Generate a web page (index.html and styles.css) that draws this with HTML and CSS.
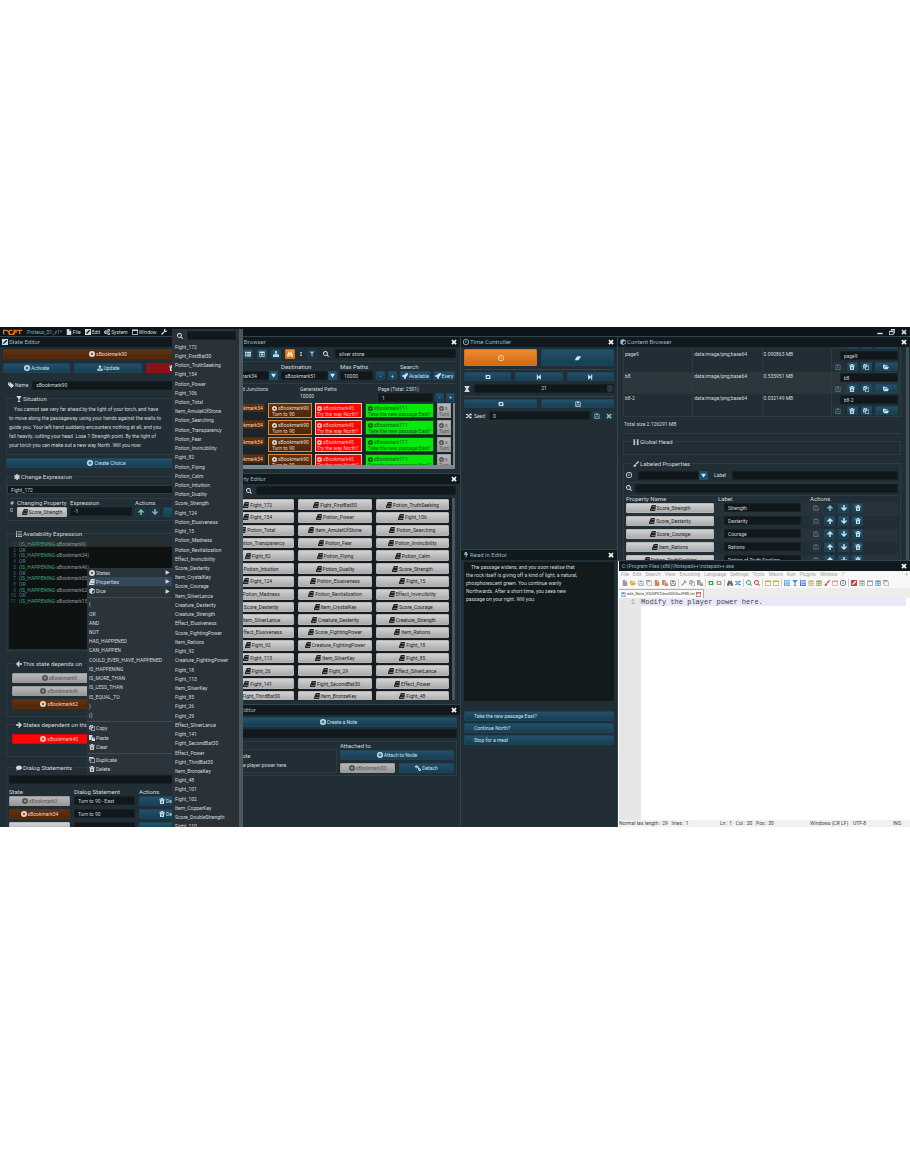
FILE: index.html
```html
<!DOCTYPE html>
<html lang="en">
<head>
<meta charset="utf-8">
<title>Proteus_01_v1*</title>
<link rel="stylesheet" href="styles.css">
</head>
<body>
<svg class="defs" aria-hidden="true">
<symbol id="star" viewBox="0 0 16 16"><path fill-rule="evenodd" d="M8 0a8 8 0 1 0 0 16A8 8 0 0 0 8 0zm0 4 1.200 2.500 2.600.3-2 1.800.6 2.700L8 10l-2.400 1.300.6-2.700-2-1.800 2.600-.3z"/></symbol>
<symbol id="plus" viewBox="0 0 16 16"><path fill-rule="evenodd" d="M8 0a8 8 0 1 0 0 16A8 8 0 0 0 8 0zM6.700 3.500h2.600v3.200h3.200v2.600H9.300v3.200H6.700V9.300H3.500V6.700h3.200z"/></symbol>
<symbol id="upload" viewBox="0 0 16 16"><path d="M8 0l4.500 5H10v5H6V5H3.500zM1 10h3.500l1 2h5l1-2H15v5H1z"/></symbol>
<symbol id="trash" viewBox="0 0 16 16"><path fill-rule="evenodd" d="M6 0h4l1 2h4v2.500H1V2h4zM2 5.500h12L13 16H3zM5.500 7v7H7V7zM9 7v7h1.500V7z"/></symbol>
<symbol id="tag" viewBox="0 0 16 16"><path fill-rule="evenodd" d="M0 1h7l9 8-6.500 7L0 7.500zM3.500 3a1.500 1.500 0 1 0 0 3 1.500 1.500 0 0 0 0-3z"/></symbol>
<symbol id="glass" viewBox="0 0 16 16"><path d="M1 0h14L9.300 8v5.500L13 16H3l3.700-2.500V8z"/></symbol>
<symbol id="asterisk" viewBox="0 0 16 16"><path d="M6 0h4v4.500L14 2.300l2 3.400L12 8l4 2.300-2 3.400-4-2.200V16H6v-4.500l-4 2.200-2-3.400L4 8 0 5.700l2-3.400 4 2.200z"/></symbol>
<symbol id="list" viewBox="0 0 16 16"><path d="M5 1h11v2.500H5zM5 7h11v2.500H5zM5 12.500h11V15H5zM0 0h3v5H1.500V2H0zM0 6h3v4H0zM0 11h3v5H0z"/></symbol>
<symbol id="left" viewBox="0 0 16 16"><path d="M8 0l2.500 2.500L7 6h9v4H7l3.500 3.500L8 16 0 8z"/></symbol>
<symbol id="right" viewBox="0 0 16 16"><path d="M8 0L5.500 2.500 9 6H0v4h9l-3.500 3.500L8 16l8-8z"/></symbol>
<symbol id="up" viewBox="0 0 16 16"><path d="M8 0l8 8-2.500 2.500L10 7v9H6V7l-3.500 3.500L0 8z"/></symbol>
<symbol id="down" viewBox="0 0 16 16"><path d="M8 16l8-8-2.500-2.500L10 9V0H6v9L2.500 5.500 0 8z"/></symbol>
<symbol id="comment" viewBox="0 0 16 16"><path d="M8 1c5 0 8 3 8 6s-3 6-8 6c-1 0-2-.2-2.800-.4L1 15l1-4C.8 10 0 8.700 0 7c0-3 3-6 8-6z"/></symbol>
<symbol id="caret" viewBox="0 0 16 16"><path d="M2 1l13 7-13 7z"/></symbol>
<symbol id="cube" viewBox="0 0 16 16"><path fill-rule="evenodd" d="M8 0l7 3.500v9L8 16l-7-3.500v-9zm0 8v6l5.500-2.800V5.300z"/></symbol>
<symbol id="book" viewBox="0 0 16 16"><path fill-rule="evenodd" d="M5 0h11l-3 12H4c-1.500 0-1.500 1.300 0 1.300h9L15 6l1 .5L13.500 16H2c-2 0-2.500-2-2-4zm2 3L6.500 4.500h6L13 3z"/></symbol>
<symbol id="copy" viewBox="0 0 16 16"><path fill-rule="evenodd" d="M4 0h6v4H9L4.500 9v3H0V4zm6 4h6v12H6V8zM3.800 2L2 4h2zM2 5.500v5h1V8l4-4V1.500H5.500v4zm9.500 1L8 9.500v5h6.500v-9H12z"/></symbol>
<symbol id="paste" viewBox="0 0 16 16"><path d="M0 0h9v5H6v8H0zM7 6h5v4h4v6H7zm6 0l3 3h-3z"/></symbol>
<symbol id="clone" viewBox="0 0 16 16"><path fill-rule="evenodd" d="M0 0h12v3H1.500v9H0zM4 4h12v12H4zm1.500 1.500v9h9v-9z"/></symbol>
<symbol id="search" viewBox="0 0 16 16"><path fill-rule="evenodd" d="M6.500 0a6.500 6.500 0 0 1 5.300 10.200L16 14l-2 2-4-4.100A6.500 6.500 0 1 1 6.500 0zm0 2.500a4 4 0 1 0 0 8 4 4 0 0 0 0-8z"/></symbol>
<symbol id="times" viewBox="0 0 16 16"><path d="M1 4l3-3 4 4 4-4 3 3-4 4 4 4-3 3-4-4-4 4-3-3 4-4z"/></symbol>
<symbol id="th" viewBox="0 0 16 16"><path d="M0 2h4.500v3.500H0zM5.500 2H16v3.500H5.500zM0 6.500h4.500V10H0zM5.500 6.500H16V10H5.500zM0 11h4.500v3.500H0zM5.500 11H16v3.500H5.500z"/></symbol>
<symbol id="table" viewBox="0 0 16 16"><path fill-rule="evenodd" d="M1 1h14v14H1zm1.500 4v3.500h3V5zm4.500 0v3.500h2.500V5zm4 0v3.500h2.500V5zm-8.500 5v3.500h3V10zM7 10v3.500h2.500V10zm4 0v3.500h2.500V10z"/></symbol>
<symbol id="sitemap" viewBox="0 0 16 16"><path d="M5.500 0h5v5H9v2h5v3h2v6h-5v-6h1V8.500H9V10h1.500v6h-5v-6H7V8.500H4V10h1v6H0v-6h2V7h5V5H5.500z"/></symbol>
<symbol id="binoc" viewBox="0 0 16 16"><path d="M3 1h3.500v3h3V1H13v3l3 7v4H9.500v-4h-3v4H0v-4l3-7z"/></symbol>
<symbol id="dots" viewBox="0 0 16 16"><path d="M5 0h6v4H5zM5 6h6v4H5zM5 12h6v4H5z"/></symbol>
<symbol id="filter" viewBox="0 0 16 16"><path d="M1 1h14L9.500 8v8l-3-3V8z"/></symbol>
<symbol id="drop" viewBox="0 0 16 16"><path d="M0 2h16L8 15z"/></symbol>
<symbol id="rocket" viewBox="0 0 16 16"><path d="M16 0c0 5-2 8-5 10l-1 5-4 1v-4L4 10H0l1-4 5-1c2-3 5-5 10-5z"/></symbol>
<symbol id="clock" viewBox="0 0 16 16"><path fill-rule="evenodd" d="M8 0a8 8 0 1 0 0 16A8 8 0 0 0 8 0zm0 2a6 6 0 1 1 0 12A6 6 0 0 1 8 2zM7 4h2v5.500H5V8h2z"/></symbol>
<symbol id="eraser" viewBox="0 0 16 16"><path d="M6 3h10l-2 5-5 6H0l1-4z"/></symbol>
<symbol id="retweet" viewBox="0 0 16 16"><path d="M3.500 1.500L7 6.500H5V10.500h5l2 3H2v-7H0zM12.500 14.500L9 9.500h2V5.500H6L4 2.500h10v7h2z"/></symbol>
<symbol id="back" viewBox="0 0 16 16"><path d="M2 1h3v6l8-6v14L5 9v6H2z"/></symbol>
<symbol id="fwd" viewBox="0 0 16 16"><path d="M14 1h-3v6L3 1v14l8-6v6h3z"/></symbol>
<symbol id="hour" viewBox="0 0 16 16"><path d="M1 0h14v2h-1.500c0 3-1.500 4.500-3.500 6 2 1.500 3.500 3 3.500 6H15v2H1v-2h1.500c0-3 1.500-4.500 3.500-6-2-1.500-3.500-3-3.500-6H1z"/></symbol>
<symbol id="save" viewBox="0 0 16 16"><path fill-rule="evenodd" d="M1 1h11l3 3v11H1zm1.500 1.500v11H4V8.500h8v5h1.500v-9l-2-2H11V6H4.500V2.500zM5.500 10v3.500h5V10z"/></symbol>
<symbol id="shuffle" viewBox="0 0 16 16"><path d="M0 2.500h4.500l6 8H12V8l4 4-4 4v-2.500H9L3 5.500H0zM0 10.500h2.700L4.500 8 6.500 11l-2 2.500H0zM7 5l2-2.500h3V0l4 4-4 4V5.500h-1.500L9 7.500z"/></symbol>
<symbol id="bolt" viewBox="0 0 16 16"><path d="M5 0h6L9.500 4.500H14L6 16 7.500 8H3z"/></symbol>
<symbol id="folder" viewBox="0 0 16 16"><path d="M0 2h6l1.500 2H13v2H4l-3 6H0zM4.500 7H16l-3 7H1.500z"/></symbol>
<symbol id="head" viewBox="0 0 16 16"><path d="M0 1h6.500v1.500H5V7h6V2.500H9.500V1H16v1.500h-1.500v11H16V15H9.500v-1.500H11V8.700H5v4.800h1.500V15H0v-1.500h1.500v-11H0z"/></symbol>
<symbol id="brush" viewBox="0 0 16 16"><path d="M14 0c1.500 0 2 1 2 2L9.500 10 6.500 7.500zM5.500 8.500L8.700 11c0 4-4.700 5.500-8.700 4 2-1 2-2.500 2.500-4 .5-1.300 1.500-2.300 3-2.500z"/></symbol>
<symbol id="file" viewBox="0 0 16 16"><path d="M2 0h7v5.500h5V16H2zm8.500 0L14 4h-3.500z"/></symbol>
<symbol id="edit" viewBox="0 0 16 16"><path fill-rule="evenodd" d="M0 0h16v16H0zm11.500 2L4 9.500 3 13l3.500-1L14 4.500z"/></symbol>
<symbol id="cogs" viewBox="0 0 16 16"><path fill-rule="evenodd" d="M4 3h3l.5 2 2 1v3l-2 1-.5 3H4l-1-2-2.500 0L0 7l1.500-1zm1.500 3a2 2 0 1 0 0 4 2 2 0 0 0 0-4zM11 0h3l2 2v3l-2 2h-3L9 5V2zm1.500 2a1.500 1.500 0 1 0 0 3 1.500 1.500 0 0 0 0-3zM11 9h3l2 2v3l-2 2h-3l-2-2v-3zm1.500 2a1.500 1.500 0 1 0 0 3 1.500 1.500 0 0 0 0-3z"/></symbol>
<symbol id="win" viewBox="0 0 16 16"><path fill-rule="evenodd" d="M0 1h16v14H0zm2 4v8h12V5z"/></symbol>
<symbol id="wrench" viewBox="0 0 16 16"><path d="M10 0h3l-2 3 2 2 3-2c0 4-3 6-6 5l-7 8-3-3 8-7c-1-3 0-5 2-6z"/></symbol>
<symbol id="link" viewBox="0 0 16 16"><path fill-rule="evenodd" d="M3 1h3l4 4v3H7L6 7l1-1-2-2-1.500 1.500L5 7v3L0 5V3zm5 7h4l4 4v2l-2 2h-3l-3-4V9.500zm2 2v1l2.500 2.500 1-1L11 10z"/></symbol>
<symbol id="min" viewBox="0 0 16 16"><path d="M1 10h14v4H1z"/></symbol>
<symbol id="restore" viewBox="0 0 16 16"><path fill-rule="evenodd" d="M5 0h11v11h-4v5H0V5h5zm2 4v1h5v4h2V4zM2 8v6h8V8z"/></symbol>
</svg>

<main class="app">
  <header class="menubar">
    <svg class="logo" viewBox="0 0 60 16" role="img" aria-label="Logo"><path d="M2 15V3h10l6 6v6M19 3v12h12V9M28 3h-8M31 3h10M34 8h8M34 3v12M42 3h16M50 3v12" fill="none" stroke="#e2731c" stroke-width="4"/></svg>
    <span class="project">Proteus_01_v1*</span>
    <button><svg><use href="#file"/></svg>File</button>
    <button><svg><use href="#edit"/></svg>Edit</button>
    <button><svg><use href="#cogs"/></svg>System</button>
    <button><svg><use href="#win"/></svg>Window</button>
    <button aria-label="Tools"><svg><use href="#wrench"/></svg></button>
    <span class="push"></span>
    <button aria-label="Minimize"><svg><use href="#min"/></svg></button>
    <button aria-label="Restore"><svg><use href="#restore"/></svg></button>
    <button aria-label="Close"><svg><use href="#times"/></svg></button>
  </header>

  <div class="workspace">
    <section class="column">
      <article class="panel state">
        <h1><svg><use href="#edit"/></svg>State Editor</h1>
        <div class="pad stack4">
          <button class="btn brown"><svg><use href="#star"/></svg>sBookmark90</button>
          <div class="cols three wide-gap"><button class="btn"><svg><use href="#plus"/></svg>Activate</button><button class="btn"><svg><use href="#upload"/></svg>Update</button><button class="btn crimson"><svg><use href="#trash"/></svg>Delete</button></div>
        </div>
        <div class="scroller">
          <label class="name-row"><svg><use href="#tag"/></svg>Name<input value="sBookmark90"></label>
          <section class="group situation">
            <h2><svg><use href="#glass"/></svg>Situation</h2>
            <p>&emsp;You cannot see very far ahead by the light of your torch, and have<br>to move along the passageway using your hands against the walls to<br>guide you. Your left hand suddenly encounters nothing at all, and you<br>fall heavily, cutting your head. Lose 1 Strength point. By the light of<br>your torch you can make out a new way North. Will you now:</p>
          </section>
          <button class="btn create"><svg><use href="#plus"/></svg>Create Choice</button>
          <section class="group change">
            <h2><svg><use href="#asterisk"/></svg>Change Expression</h2>
            <input aria-label="Change expression" value="Fight_172">
            <table>
              <tr><th>#</th><th>Changing Property</th><th>Expression</th><th>Actions</th></tr>
              <tr><td>0</td><td><button class="btn gray"><svg><use href="#book"/></svg>Score_Strength</button></td><td><input aria-label="Expression" value="-1"></td><td><span class="acts"><button class="btn dim" aria-label="Up"><svg><use href="#up"/></svg></button><button class="btn dim" aria-label="Down"><svg><use href="#down"/></svg></button><button class="btn grow" aria-label="Delete"></button></span></td></tr>
            </table>
          </section>
          <section class="group avail">
            <h2><svg><use href="#list"/></svg>Availability Expression</h2>
            <div class="code"><ol>
              <li class="cur"><i>1</i><b>(IS_HAPPENING</b>·sBookmark9<b>)</b></li><li><i>2</i><em>OR</em></li>
              <li><i>3</i><b>(IS_HAPPENING</b>·sBookmark34<b>)</b></li><li><i>4</i><em>OR</em></li>
              <li><i>5</i><b>(IS_HAPPENING</b>·sBookmark46<b>)</b></li><li><i>6</i><em>OR</em></li>
              <li><i>7</i><b>(IS_HAPPENING</b>·sBookmark55<b>)</b></li><li><i>8</i><em>OR</em></li>
              <li><i>9</i><b>(IS_HAPPENING</b>·sBookmark62<b>)</b></li><li><i>10</i><em>OR</em></li>
              <li><i>11</i><b>(IS_HAPPENING</b>·sBookmark15<b>)</b></li>
            </ol></div>
          </section>
          <section class="group depends">
            <h2><svg><use href="#left"/></svg>This state depends on</h2>
            <button class="btn gray faint"><svg><use href="#star"/></svg>sBookmark9</button>
            <button class="btn gray faint"><svg><use href="#star"/></svg>sBookmark46</button>
            <button class="btn brown"><svg><use href="#star"/></svg>sBookmark62</button>
          </section>
          <section class="group dependent">
            <h2><svg><use href="#right"/></svg>States dependent on this</h2>
            <button class="btn red"><svg><use href="#star"/></svg>sBookmark45</button>
          </section>
          <section class="group dialog">
            <h2><svg><use href="#comment"/></svg>Dialog Statements</h2>
            <input aria-label="Dialog filter">
            <table>
              <tr><th>State</th><th>Dialog Statement</th><th>Actions</th></tr>
              <tr><td><button class="btn gray faint"><svg><use href="#star"/></svg>sBookmark3</button></td><td><input aria-label="Statement" value="Turn to 90 - East"></td><td><button class="btn"><svg><use href="#trash"/></svg>Delete</button></td></tr>
              <tr><td><button class="btn brown"><svg><use href="#star"/></svg>sBookmark34</button></td><td><input aria-label="Statement" value="Turn to 90"></td><td><button class="btn"><svg><use href="#trash"/></svg>Delete</button></td></tr>
              <tr><td><button class="btn gray" aria-label="State"></button></td><td><input aria-label="Statement"></td><td><button class="btn" aria-label="Delete"></button></td></tr>
            </table>
          </section>
        </div>
      </article>
    </section>

    <section class="column middle">
      <article class="panel">
        <h1 class="lead-wide"><span>Path Browser</span><button aria-label="Close"><svg><use href="#times"/></svg></button></h1>
        <div class="tools">
          <button class="btn" aria-label="Grid"><svg><use href="#th"/></svg></button><button class="btn" aria-label="Table"><svg><use href="#table"/></svg></button><button class="btn" aria-label="Tree"><svg><use href="#sitemap"/></svg></button><button class="btn orange" aria-label="Find"><svg><use href="#binoc"/></svg></button><svg class="thin"><use href="#dots"/></svg><button class="btn dim" aria-label="Filter"><svg><use href="#filter"/></svg></button><svg class="find"><use href="#search"/></svg><input aria-label="Search paths" value="silver stone">
        </div>
        <div class="paths">
          <div class="query">
            <label>Origin<span class="combo"><select><option>sBookmark34</option></select><svg><use href="#drop"/></svg></span></label>
            <label>Destination<span class="combo"><select><option>sBookmark51</option></select><svg><use href="#drop"/></svg></span></label>
            <label>Max Paths<input value="10000"></label>
            <button class="btn">-</button><button class="btn">+</button>
            <div class="search-by"><span>Search</span><span class="pair"><button class="btn"><svg><use href="#rocket"/></svg>Available</button><button class="btn"><svg><use href="#rocket"/></svg>Every</button></span></div>
          </div>
          <div class="stats">
            <div>Generated Junctions</div><div>Generated Paths<br>10000</div>
            <div>Page (Total: 2501)<span class="pager"><input aria-label="Page" value="1"><button class="btn">-</button><button class="btn">+</button></span></div>
          </div>
          <div class="results">
            <div class="steps"><button class="step brown"><svg><use href="#star"/></svg>sBookmark34</button><button class="step brown lit"><svg><use href="#star"/></svg>sBookmark90<br>Turn to 90</button><button class="step red"><svg><use href="#star"/></svg>sBookmark45<br>Try the way North?</button><button class="step green"><svg><use href="#star"/></svg>sBookmark111<br>Take the new passage East?</button><button class="step gray faint"><svg><use href="#star"/></svg>s<br>Turn</button></div>
            <div class="steps"><button class="step brown"><svg><use href="#star"/></svg>sBookmark34</button><button class="step brown lit"><svg><use href="#star"/></svg>sBookmark90<br>Turn to 90</button><button class="step red"><svg><use href="#star"/></svg>sBookmark45<br>Try the way North?</button><button class="step green"><svg><use href="#star"/></svg>sBookmark111<br>Take the new passage East?</button><button class="step gray faint"><svg><use href="#star"/></svg>s<br>Turn</button></div>
            <div class="steps"><button class="step brown"><svg><use href="#star"/></svg>sBookmark34</button><button class="step brown lit"><svg><use href="#star"/></svg>sBookmark90<br>Turn to 90</button><button class="step red"><svg><use href="#star"/></svg>sBookmark45<br>Try the way North?</button><button class="step green"><svg><use href="#star"/></svg>sBookmark111<br>Take the new passage East?</button><button class="step gray faint"><svg><use href="#star"/></svg>s<br>Turn</button></div>
            <div class="steps"><button class="step brown"><svg><use href="#star"/></svg>sBookmark34</button><button class="step brown lit"><svg><use href="#star"/></svg>sBookmark90<br>Turn to 90</button><button class="step red"><svg><use href="#star"/></svg>sBookmark45<br>Try the way North?</button><button class="step green"><svg><use href="#star"/></svg>sBookmark111<br>Take the new passage East?</button><button class="step gray faint"><svg><use href="#star"/></svg>s<br>Turn</button></div>
          </div>
        </div>
      </article>

      <article class="panel">
        <h1 class="lead"><span>Property Editor</span><button aria-label="Close"><svg><use href="#times"/></svg></button></h1>
        <label class="prop-search"><svg><use href="#search"/></svg><input aria-label="Search properties"></label>
        <div class="prop-view"><div class="props">
          <button class="btn gray"><svg><use href="#book"/></svg>Fight_172</button><button class="btn gray"><svg><use href="#book"/></svg>Fight_FirstBat30</button><button class="btn gray"><svg><use href="#book"/></svg>Potion_TruthSeeking</button>
          <button class="btn gray"><svg><use href="#book"/></svg>Fight_154</button><button class="btn gray"><svg><use href="#book"/></svg>Potion_Power</button><button class="btn gray"><svg><use href="#book"/></svg>Fight_106</button>
          <button class="btn gray"><svg><use href="#book"/></svg>Potion_Total</button><button class="btn gray"><svg><use href="#book"/></svg>Item_AmuletOfStone</button><button class="btn gray"><svg><use href="#book"/></svg>Potion_Searching</button>
          <button class="btn gray"><svg><use href="#book"/></svg>Potion_Transparency</button><button class="btn gray"><svg><use href="#book"/></svg>Potion_Fear</button><button class="btn gray"><svg><use href="#book"/></svg>Potion_Invincibility</button>
          <button class="btn gray"><svg><use href="#book"/></svg>Fight_82</button><button class="btn gray"><svg><use href="#book"/></svg>Potion_Flying</button><button class="btn gray"><svg><use href="#book"/></svg>Potion_Calm</button>
          <button class="btn gray"><svg><use href="#book"/></svg>Potion_Intuition</button><button class="btn gray"><svg><use href="#book"/></svg>Potion_Duality</button><button class="btn gray"><svg><use href="#book"/></svg>Score_Strength</button>
          <button class="btn gray"><svg><use href="#book"/></svg>Fight_124</button><button class="btn gray"><svg><use href="#book"/></svg>Potion_Elusiveness</button><button class="btn gray"><svg><use href="#book"/></svg>Fight_15</button>
          <button class="btn gray"><svg><use href="#book"/></svg>Potion_Madness</button><button class="btn gray"><svg><use href="#book"/></svg>Potion_Revitalization</button><button class="btn gray"><svg><use href="#book"/></svg>Effect_Invincibility</button>
          <button class="btn gray"><svg><use href="#book"/></svg>Score_Dexterity</button><button class="btn gray"><svg><use href="#book"/></svg>Item_CrystalKey</button><button class="btn gray"><svg><use href="#book"/></svg>Score_Courage</button>
          <button class="btn gray"><svg><use href="#book"/></svg>Item_SilverLance</button><button class="btn gray"><svg><use href="#book"/></svg>Creature_Dexterity</button><button class="btn gray"><svg><use href="#book"/></svg>Creature_Strength</button>
          <button class="btn gray"><svg><use href="#book"/></svg>Effect_Elusiveness</button><button class="btn gray"><svg><use href="#book"/></svg>Score_FightingPower</button><button class="btn gray"><svg><use href="#book"/></svg>Item_Rations</button>
          <button class="btn gray"><svg><use href="#book"/></svg>Fight_92</button><button class="btn gray"><svg><use href="#book"/></svg>Creature_FightingPower</button><button class="btn gray"><svg><use href="#book"/></svg>Fight_18</button>
          <button class="btn gray"><svg><use href="#book"/></svg>Fight_113</button><button class="btn gray"><svg><use href="#book"/></svg>Item_SilverKey</button><button class="btn gray"><svg><use href="#book"/></svg>Fight_85</button>
          <button class="btn gray"><svg><use href="#book"/></svg>Fight_26</button><button class="btn gray"><svg><use href="#book"/></svg>Fight_29</button><button class="btn gray"><svg><use href="#book"/></svg>Effect_SilverLance</button>
          <button class="btn gray"><svg><use href="#book"/></svg>Fight_141</button><button class="btn gray"><svg><use href="#book"/></svg>Fight_SecondBat30</button><button class="btn gray"><svg><use href="#book"/></svg>Effect_Power</button>
          <button class="btn gray"><svg><use href="#book"/></svg>Fight_ThirdBat30</button><button class="btn gray"><svg><use href="#book"/></svg>Item_BronzeKey</button><button class="btn gray"><svg><use href="#book"/></svg>Fight_48</button>
        </div></div>
      </article>

      <article class="panel">
        <h1 class="lead"><span>Note Editor</span><button aria-label="Close"><svg><use href="#times"/></svg></button></h1>
        <div class="pad note-top"><button class="btn"><svg><use href="#plus"/></svg>Create a Note</button><input aria-label="Filter notes"></div>
        <div class="note">
          <div class="note-text"><h3>Edit Note</h3><p>Modify the player power here.</p></div>
          <div class="attach"><h3>Attached to</h3><button class="btn"><svg><use href="#plus"/></svg>Attach to Node</button><div class="cols two wide-gap"><button class="btn gray faint"><svg><use href="#star"/></svg>sBookmark33</button><button class="btn"><svg><use href="#link"/></svg>Detach</button></div></div>
        </div>
      </article>
    </section>

    <section class="column time">
      <article class="panel">
        <h1><svg><use href="#clock"/></svg><span>Time Controller</span><button aria-label="Close"><svg><use href="#times"/></svg></button></h1>
        <div class="pad controls">
          <div class="cols two wide-gap tall"><button class="btn orange" aria-label="Time"><svg><use href="#clock"/></svg></button><button class="btn" aria-label="Erase"><svg><use href="#eraser"/></svg></button></div>
          <div class="cols three wide-gap ruled"><button class="btn" aria-label="Loop"><svg><use href="#retweet"/></svg></button><button class="btn" aria-label="Step back"><svg><use href="#back"/></svg></button><button class="btn" aria-label="Step forward"><svg><use href="#fwd"/></svg></button></div>
          <label class="slider"><svg><use href="#hour"/></svg><span class="track"><input type="range" aria-label="Time" max="21" value="21"><output>21</output></span></label>
          <div class="cols two wide-gap ruled"><button class="btn" aria-label="Reroll"><svg><use href="#retweet"/></svg></button><button class="btn" aria-label="Save"><svg><use href="#save"/></svg></button></div>
          <div class="seed"><svg><use href="#shuffle"/></svg><label for="seed">Seed</label><input id="seed" value="0"><button class="btn dim" aria-label="Save seed"><svg><use href="#save"/></svg></button><button class="btn dim" aria-label="Clear seed"><svg><use href="#times"/></svg></button></div>
        </div>
      </article>
      <article class="panel">
        <h1><svg><use href="#bolt"/></svg><span>Read in Editor</span><button aria-label="Close"><svg><use href="#times"/></svg></button></h1>
        <div class="passage">&emsp;The passage widens, and you soon realise that<br>the rock itself is giving off a kind of light, a natural,<br>phosphorescent green. You continue warily<br>Northwards. After a short time, you seea new<br>passage on your right. Will you:</div>
        <div class="choices"><button class="btn">Take the new passage East?</button><button class="btn">Continue North?</button><button class="btn">Stop for a meal</button></div>
      </article>
    </section>

    <section class="column right">
      <article class="panel">
        <h1><svg><use href="#cube"/></svg><span>Content Browser</span><button aria-label="Close"><svg><use href="#times"/></svg></button></h1>
        <div class="content">
          <table class="assets">
            <tr class="peek"><td></td><td></td><td></td><td><span class="acts"><button class="btn off" aria-label="Save"></button><button class="btn" aria-label="Delete"></button><button class="btn" aria-label="Copy"></button><button class="btn grow" aria-label="Open"></button></span></td></tr>
            <tr><td>page9</td><td>data:image/png;base64</td><td>0.090863 MB</td><td><input aria-label="Name" value="page9"><span class="acts"><button class="btn off" aria-label="Save"><svg><use href="#save"/></svg></button><button class="btn" aria-label="Delete"><svg><use href="#trash"/></svg></button><button class="btn" aria-label="Copy"><svg><use href="#copy"/></svg></button><button class="btn grow" aria-label="Open"><svg><use href="#folder"/></svg></button></span></td></tr>
            <tr class="alt"><td>b8</td><td>data:image/png;base64</td><td>0.535951 MB</td><td><input aria-label="Name" value="b8"><span class="acts"><button class="btn off" aria-label="Save"><svg><use href="#save"/></svg></button><button class="btn" aria-label="Delete"><svg><use href="#trash"/></svg></button><button class="btn" aria-label="Copy"><svg><use href="#copy"/></svg></button><button class="btn grow" aria-label="Open"><svg><use href="#folder"/></svg></button></span></td></tr>
            <tr><td>b8-2</td><td>data:image/png;base64</td><td>0.032149 MB</td><td><input aria-label="Name" value="b8-2"><span class="acts"><button class="btn off" aria-label="Save"><svg><use href="#save"/></svg></button><button class="btn" aria-label="Delete"><svg><use href="#trash"/></svg></button><button class="btn" aria-label="Copy"><svg><use href="#copy"/></svg></button><button class="btn grow" aria-label="Open"><svg><use href="#folder"/></svg></button></span></td></tr>
          </table>
          <p class="total">Total size 2.126291 MB</p>
          <section class="group global"><h2><svg><use href="#head"/></svg>Global Head</h2></section>
          <section class="group labeled">
            <h2><svg><use href="#brush"/></svg>Labeled Properties</h2>
            <div class="add"><svg><use href="#clock"/></svg><span class="combo"><select aria-label="Property"><option></option></select><svg><use href="#drop"/></svg></span><label for="lab">Label</label><input id="lab"></div>
            <label class="lsearch"><svg><use href="#search"/></svg><input aria-label="Search labels"></label>
            <table class="labels">
              <tr><th>Property Name</th><th>Label</th><th>Actions</th></tr>
              <tr><td><button class="btn gray"><svg><use href="#book"/></svg>Score_Strength</button></td><td><input aria-label="Label" value="Strength"></td><td><span class="acts"><button class="btn off" aria-label="Save"><svg><use href="#save"/></svg></button><button class="btn dim" aria-label="Up"><svg><use href="#up"/></svg></button><button class="btn" aria-label="Down"><svg><use href="#down"/></svg></button><button class="btn" aria-label="Delete"><svg><use href="#trash"/></svg></button></span></td></tr>
              <tr><td><button class="btn gray"><svg><use href="#book"/></svg>Score_Dexterity</button></td><td><input aria-label="Label" value="Dexterity"></td><td><span class="acts"><button class="btn off" aria-label="Save"><svg><use href="#save"/></svg></button><button class="btn" aria-label="Up"><svg><use href="#up"/></svg></button><button class="btn" aria-label="Down"><svg><use href="#down"/></svg></button><button class="btn" aria-label="Delete"><svg><use href="#trash"/></svg></button></span></td></tr>
              <tr><td><button class="btn gray"><svg><use href="#book"/></svg>Score_Courage</button></td><td><input aria-label="Label" value="Courage"></td><td><span class="acts"><button class="btn off" aria-label="Save"><svg><use href="#save"/></svg></button><button class="btn" aria-label="Up"><svg><use href="#up"/></svg></button><button class="btn" aria-label="Down"><svg><use href="#down"/></svg></button><button class="btn" aria-label="Delete"><svg><use href="#trash"/></svg></button></span></td></tr>
              <tr><td><button class="btn gray"><svg><use href="#book"/></svg>Item_Rations</button></td><td><input aria-label="Label" value="Rations"></td><td><span class="acts"><button class="btn off" aria-label="Save"><svg><use href="#save"/></svg></button><button class="btn" aria-label="Up"><svg><use href="#up"/></svg></button><button class="btn" aria-label="Down"><svg><use href="#down"/></svg></button><button class="btn" aria-label="Delete"><svg><use href="#trash"/></svg></button></span></td></tr>
              <tr><td><button class="btn gray"><svg><use href="#book"/></svg>Potion_TruthSeeking</button></td><td><input aria-label="Label" value="Potion of Truth Seeking"></td><td><span class="acts"><button class="btn off" aria-label="Save"><svg><use href="#save"/></svg></button><button class="btn" aria-label="Up"><svg><use href="#up"/></svg></button><button class="btn" aria-label="Down"><svg><use href="#down"/></svg></button><button class="btn" aria-label="Delete"><svg><use href="#trash"/></svg></button></span></td></tr>
            </table>
          </section>
        </div>
      </article>
      <article class="panel notepad">
        <h1><span>C:\Program Files (x86)\Notepad++\notepad++.exe</span><button aria-label="Close"><svg><use href="#times"/></svg></button></h1>
        <nav class="np-menu"><span>File</span><span>Edit</span><span>Search</span><span>View</span><span>Encoding</span><span>Language</span><span>Settings</span><span>Tools</span><span>Macro</span><span>Run</span><span>Plugins</span><span>Window</span><span>?</span><span class="x">×</span></nav>
        <div class="np-tools">
          <svg class="c-gray"><use href="#file"/></svg><svg class="c-yellow"><use href="#folder"/></svg><svg class="c-gray"><use href="#save"/></svg><svg class="c-gray"><use href="#clone"/></svg><svg class="c-orange"><use href="#file"/></svg><svg class="c-orange"><use href="#paste"/></svg><svg class="c-slate"><use href="#save"/></svg><hr><svg class="c-gray"><use href="#wrench"/></svg><svg class="c-gray"><use href="#copy"/></svg><svg class="c-gray"><use href="#paste"/></svg><hr><svg class="c-green"><use href="#retweet"/></svg><svg class="c-gray"><use href="#retweet"/></svg><hr><svg class="c-slate"><use href="#binoc"/></svg><svg class="c-blue"><use href="#shuffle"/></svg><hr><svg class="c-teal"><use href="#search"/></svg><svg class="c-red"><use href="#search"/></svg><hr><svg class="c-yellow"><use href="#win"/></svg><svg class="c-yellow"><use href="#win"/></svg><hr><svg class="c-blue on"><use href="#list"/></svg><svg class="c-blue"><use href="#glass"/></svg><svg class="c-deep on"><use href="#list"/></svg><svg class="c-yellow"><use href="#table"/></svg><svg class="c-olive"><use href="#table"/></svg><svg class="c-red"><use href="#brush"/></svg><svg class="c-pink"><use href="#win"/></svg><svg class="c-slate"><use href="#clock"/></svg><hr><svg class="c-red"><use href="#edit"/></svg><svg class="c-gray"><use href="#table"/></svg><svg class="c-gray"><use href="#win"/></svg><svg class="c-blue"><use href="#table"/></svg><svg class="c-gray"><use href="#clone"/></svg>
        </div>
        <div class="np-tabs"><span><svg class="c-blue"><use href="#save"/></svg>edit_Note_XOt5P0Tdno50SGuJFMI.txt<svg class="c-red"><use href="#win"/></svg></span></div>
        <div class="np-body"><span class="ln">1</span><div class="np-line">Modify the player power here.</div></div>
        <footer><span>Normal tex length : 29 &nbsp; lines : 1</span><span>Ln : 1 &nbsp; Col : 30 &nbsp; Pos : 30</span><span>Windows (CR LF)</span><span>UTF-8</span><span>INS</span></footer>
      </article>
    </section>
  </div>

  <menu class="context">
    <li><svg><use href="#star"/></svg>States<svg class="more"><use href="#caret"/></svg></li><li class="hot"><svg><use href="#book"/></svg>Properties<svg class="more"><use href="#caret"/></svg></li><li><svg><use href="#cube"/></svg>Dice<svg class="more"><use href="#caret"/></svg></li>
    <li class="sep"></li>
    <li>(</li><li>OR</li><li>AND</li><li>NOT</li><li>HAS_HAPPENED</li><li>CAN_HAPPEN</li><li>COULD_EVER_HAVE_HAPPENED</li><li>IS_HAPPENING</li><li>IS_MORE_THAN</li><li>IS_LESS_THAN</li><li>IS_EQUAL_TO</li><li>)</li><li>()</li>
    <li class="sep"></li>
    <li><svg><use href="#copy"/></svg>Copy</li><li><svg><use href="#paste"/></svg>Paste</li><li><svg><use href="#trash"/></svg>Clear</li>
    <li class="sep"></li>
    <li><svg><use href="#clone"/></svg>Duplicate</li><li><svg><use href="#trash"/></svg>Delete</li>
  </menu>

  <div class="submenu">
    <label><svg><use href="#search"/></svg><input aria-label="Search menu"></label>
    <menu>
      <li>Fight_172</li><li>Fight_FirstBat30</li><li>Potion_TruthSeeking</li><li>Fight_154</li><li>Potion_Power</li><li>Fight_106</li><li>Potion_Total</li><li>Item_AmuletOfStone</li><li>Potion_Searching</li><li>Potion_Transparency</li><li>Potion_Fear</li><li>Potion_Invincibility</li><li>Fight_82</li><li>Potion_Flying</li><li>Potion_Calm</li><li>Potion_Intuition</li><li>Potion_Duality</li><li>Score_Strength</li><li>Fight_124</li><li>Potion_Elusiveness</li><li>Fight_15</li><li>Potion_Madness</li><li>Potion_Revitalization</li><li>Effect_Invincibility</li><li>Score_Dexterity</li><li>Item_CrystalKey</li><li>Score_Courage</li><li>Item_SilverLance</li><li>Creature_Dexterity</li><li>Creature_Strength</li><li>Effect_Elusiveness</li><li>Score_FightingPower</li><li>Item_Rations</li><li>Fight_92</li><li>Creature_FightingPower</li><li>Fight_18</li><li>Fight_113</li><li>Item_SilverKey</li><li>Fight_85</li><li>Fight_26</li><li>Fight_29</li><li>Effect_SilverLance</li><li>Fight_141</li><li>Fight_SecondBat30</li><li>Effect_Power</li><li>Fight_ThirdBat30</li><li>Item_BronzeKey</li><li>Fight_48</li><li>Fight_101</li><li>Fight_102</li><li>Item_CopperKey</li><li>Score_DoubleStrength</li><li>Fight_110</li>
    </menu>
  </div>
</main>
</body>
</html>
```
FILE: styles.css
```css
* { box-sizing: border-box; }
body { margin: 0; min-height: 100vh; padding-bottom: 1px; display: flex; align-items: center; background: #fff; font: 5px/6px Roboto, "Liberation Sans", sans-serif; color: #d3dadc; }
.defs { position: absolute; width: 0; height: 0; }
svg { width: 6px; height: 6px; fill: currentColor; flex: none; }
h1, h2, h3, p, menu, ol { margin: 0; padding: 0; font-weight: 400; list-style: none; }
button { font: inherit; color: inherit; background: none; border: 0; padding: 0; display: flex; align-items: center; justify-content: center; gap: 1px; white-space: nowrap; }
input, select { font: inherit; color: #cdd4d6; background: #10181b; border: 1px solid #172125; border-radius: 1px; padding: 0 3px; margin: 0; height: 9px; min-width: 0; width: 100%; outline: 0; appearance: none; }
table { width: 100%; border-collapse: collapse; table-layout: fixed; }
th { font: inherit; font-size: 6px; text-align: left; padding: 0; color: #d3dadc; white-space: nowrap; }
td { padding: 0; vertical-align: top; }

.app { position: relative; width: 100%; aspect-ratio: 91 / 50; display: flex; flex-direction: column; overflow: hidden; background: #0e1518; }
.menubar { height: 9px; flex: none; display: flex; align-items: center; gap: 4px; padding: 0 3px; background: #0e1518; }
.menubar .logo { width: 20px; height: 6px; }
.menubar .project { color: #7fa9b8; }
.push { flex: 1; }
.menubar .push ~ button { margin-left: 2px; }
.workspace { flex: 1; min-height: 0; display: grid; grid-template-columns: 217fr 244fr 157fr 292fr; }
.column { display: grid; grid-template-rows: minmax(0, 1fr); min-width: 0; min-height: 0; }
.middle { grid-template-rows: 137fr 230fr 123fr; }
.time { grid-template-rows: 213fr 277fr; }
.right { grid-template-rows: 224fr 266fr; }
.panel { display: flex; flex-direction: column; min-width: 0; min-height: 0; overflow: hidden; background: #222e35; border: solid #33444c; border-width: 1px 1px 0 0; }
.panel > h1 { height: 10px; flex: none; display: flex; align-items: center; gap: 1px; font-size: 6px; color: #93b7c4; background: #10191d; padding: 0 3px 0 2px; }
.panel > h1 span { flex: 1; white-space: nowrap; }
.panel > h1 button { color: #fff; }
.state > h1 svg { color: #b9e2f2; }
.panel > .lead { padding-left: 9px; }
.panel > .lead-wide { padding-left: 13px; }
.pad { padding: 2px 3px 0; }
.stack4 { display: flex; flex-direction: column; gap: 4px; }

.btn { height: 10px; width: 100%; min-width: 0; color: #cfe2ea; background: linear-gradient(#22516a, #173e54); border: 1px solid #1b455b; border-radius: 1px; overflow: hidden; }
.brown { background: linear-gradient(#62330f, #4e260a); border-color: #5a2e0d; color: #e5d8cc; }
.crimson { background: #8d1218; border-color: #8d1218; }
.red { background: #fb0505; border-color: #d80404; color: #ffc4b8; }
.green { background: #05ea0a; border-color: #0bb60e; color: #0d5510; }
.gray { background: linear-gradient(#d2d2d2, #ababab); border-color: #b5b5b5; color: #222; }
.gray.faint { color: #555; background: linear-gradient(#b8b8b8, #999); border-color: #999; }
.orange { background: linear-gradient(#f08a2d, #cf6b15); border-color: #d6741d; color: #ffdcb4; }
.dim { background: #1c3542; border-color: #1e3947; color: #8fb5c4; }
.off { background: none; border-color: #26363e; color: #5f7680; }
.grow { flex: 1; }
.cols { display: grid; }
.three { grid-template-columns: repeat(3, 1fr); }
.two { grid-template-columns: repeat(2, 1fr); }
.wide-gap { gap: 4px; }

.scroller { flex: 1; min-height: 0; overflow: hidden; padding: 7px 9px 0 6px; display: flex; flex-direction: column; }
.scroller > * { flex: none; }
.name-row { display: flex; align-items: center; gap: 1px; padding-left: 2px; height: 10px; }
.name-row input { margin-left: 3px; }
.group { border: 1px solid #2d3c44; padding: 0 2px; }
.group h2 { display: flex; align-items: center; gap: 1px; width: max-content; height: 8px; margin: -4px 0 0 5px; padding: 0 2px; font-size: 6px; background: #222e35; white-space: nowrap; }
.situation { margin-top: 8px; height: 57px; }
.situation p { padding-top: 2px; line-height: 9px; white-space: nowrap; }
.create { margin: 3px 0 8px; }
.change { height: 45px; padding: 0; margin-bottom: 12px; }
.change > input { margin: 4px 0; border-color: #2d3c44; }
.change th:first-child { width: 7px; }
.change th:nth-child(2) { width: 53px; }
.change th:nth-child(3) { width: 65px; }
.change table { border-top: 1px solid #2d3c44; margin: 0 3px; width: calc(100% - 6px); }
.change th { height: 8px; }
.change td:nth-child(2) { padding-right: 3px; }
.change td:nth-child(3) { padding-right: 3px; }
.acts { display: flex; gap: 3px; }
.acts .btn:not(.grow) { width: 11px; flex: none; }
.avail { height: 118px; margin-bottom: 12px; }
.code { height: 108px; margin-top: 3px; background: #0f1213; }
.code ol { height: 63px; display: grid; grid-auto-rows: minmax(0, 1fr); }
.code li { display: flex; align-items: center; color: #8f9a9c; white-space: nowrap; min-height: 0; }
.code li.cur { background: #2a2c2d; }
.code i { width: 7px; margin-right: 3px; text-align: right; font-style: normal; color: #2f6474; }
.code b { font-weight: 400; color: #3fa37c; }
.code em { font-style: normal; color: #4f85ad; }
.depends { height: 54px; margin-bottom: 7px; display: flex; flex-direction: column; gap: 3px; padding: 0 5px; }
.depends h2, .dependent h2 { margin-left: 2px; }
.depends h2 { margin-bottom: 2px; }
.depends .btn, .dependent .btn { width: 50%; }
.dependent { height: 33px; padding: 0 5px; margin-bottom: 10px; }
.dependent h2 { margin-bottom: 5px; }
.dialog { height: 80px; }
.dialog > input { margin: 3px 0; }
.dialog th { height: 9px; }
.dialog th:nth-child(1) { width: 65px; }
.dialog th:nth-child(2) { width: 65px; }
.dialog tr { height: 13px; }
.dialog tr:first-child { height: 9px; }
.dialog td { padding-right: 4px; }

.tools { display: flex; align-items: center; gap: 4px; padding: 1px 4px 0 26px; height: 12px; flex: none; }
.tools .btn { width: 10px; flex: none; }
.tools .thin { width: 4px; }
.tools .find { margin: 0 2px; }
.paths { flex: 1; min-height: 0; margin: 2px 5px 4px 5px; overflow: hidden; display: flex; flex-direction: column; border-top: 1px solid #2d3c44; }
.query { display: flex; align-items: flex-end; gap: 3px; height: 18px; flex: none; }
.query label, .search-by { display: flex; flex-direction: column; gap: 1px; flex: none; width: 56px; font-size: 6px; }
.query input, .query select, .pair { font-size: 5px; }
.query label:nth-child(3) { width: 33px; }
.query > .btn { width: 9px; height: 9px; flex: none; }
.search-by { width: auto; }
.pair { display: flex; gap: 2px; }
.pair .btn { width: 31px; height: 9px; flex: none; }
.pair .btn + .btn { width: 22px; }
.combo { display: flex; width: 100%; }
.combo svg { width: 9px; height: 9px; padding: 2px; background: #1d506a; color: #d5e8ef; }
.stats { display: grid; grid-template-columns: 78px 78px 1fr; height: 19px; flex: none; margin-top: 3px; padding-top: 2px; border-top: 1px solid #2d3c44; }
.stats > div { line-height: 7px; white-space: nowrap; }
.pager { display: flex; gap: 2px; align-items: center; }
.pager .btn { width: 9px; height: 9px; flex: none; }
.results { flex: 1; overflow: hidden; margin-top: 1px; display: flex; flex-direction: column; gap: 2px; background: #1a2429; border: solid #7d8990; border-width: 0 2px 4px 0; }
.steps { display: flex; align-items: flex-start; gap: 3px; flex: none; }
.step { display: block; flex: none; text-align: left; height: 15px; padding: 0 3px; border: 1px solid; line-height: 6px; overflow: hidden; }
.step svg { vertical-align: -1px; width: 5px; height: 5px; margin-right: 1px; }
.step:nth-child(1) { width: 43px; height: 9px; border-color: #4e260a; }
.step:nth-child(2) { width: 44px; }
.step:nth-child(3) { width: 47px; padding: 0 1px; }
.step:nth-child(4) { width: 69px; padding: 0 2px; }
.step:nth-child(5) { width: 14px; padding: 0 1px; }
.step.lit { border-color: #dd8b3c; }

.prop-search { display: flex; align-items: center; gap: 4px; padding: 2px 4px 2px 29px; }
.prop-view { flex: 1; min-height: 0; overflow: hidden; margin: 1px 5px 4px 4px; border-right: 3px solid #46565e; background: #151d21; padding: 1px 3px 0 0; display: flex; flex-direction: column; }
.props { flex: none; height: 101%; display: grid; grid-template-columns: repeat(3, 1fr); grid-auto-rows: minmax(0, 1fr); gap: 2px 4px; }
.props .btn { height: auto; }
.note-top { display: flex; flex-direction: column; gap: 2px; padding-bottom: 3px; }
.note { display: grid; grid-template-columns: 119fr 119fr; margin: 0 3px; border: 1px solid #2d3c44; gap: 3px; padding: 0 2px 2px; }
.note h3 { font-size: 6px; line-height: 7px; }
.note-text { border: 1px solid #2d3c44; border-left: 0; margin-top: 7px; padding-top: 2px; }
.note-text h3 { padding-left: 3px; }
.note-text p { margin-top: 3px; margin-left: -1px; }
.attach { display: flex; flex-direction: column; gap: 1px; }
.attach .cols { margin-top: 2px; }

.controls .btn { height: 9px; }
.controls .tall .btn { height: 17px; }
.ruled { border-top: 1px solid #33444c; margin-top: 3px; padding-top: 2px; }
.slider { display: flex; align-items: center; gap: 4px; margin-top: 3px; }
.track { flex: 1; display: grid; }
.track > * { grid-area: 1 / 1; }
.track output { text-align: center; line-height: 9px; pointer-events: none; }
.track input { padding: 0; }
.track input::-webkit-slider-thumb { appearance: none; width: 6px; height: 7px; background: #2b373d; border-radius: 2px; }
.seed { display: flex; align-items: center; gap: 2px; margin-top: 3px; padding-left: 2px; }
.seed input { margin-left: 2px; }
.seed .btn { width: 10px; flex: none; }
.passage { flex: none; height: 139px; margin: 2px 3px 10px; padding: 1px 2px; background: #121a1c; line-height: 8px; white-space: nowrap; }
.choices { display: flex; flex-direction: column; gap: 2px; padding: 0 3px; }
.choices .btn { justify-content: flex-start; padding-left: 9px; }

.right .panel { border-right: 0; }
.content { flex: 1; min-height: 0; overflow: hidden; margin-right: 1px; padding: 0 5px 0 5px; border-right: 3px solid #3e4f58; }
.assets { border: solid #2d3c44; border-width: 0 1px 1px; }
.assets td { border-right: 1px solid #2d3c44; padding: 1px 1px 0; height: 22px; }
.assets td:last-child { padding: 1px 2px 0 1px; }
.assets td:last-child input { width: calc(100% - 7px); margin-left: 7px; display: block; margin-bottom: 2px; }
.assets .peek td, .assets .peek td:last-child { height: 3px; padding-top: 0; }
.assets .alt { background: #2b363d; }
.assets .acts .btn { height: 9px; }
.assets .peek .btn { height: 2px; }
.total { padding: 4px 1px 6px; border-bottom: 1px solid #2d3c44; }
.global { margin-top: 7px; height: 14px; }
.labeled { margin-top: 8px; }
.add { display: flex; align-items: center; gap: 6px; padding: 3px 0 2px; }
.add .combo { width: 70px; flex: none; }
.lsearch { display: flex; align-items: center; gap: 3px; border-top: 1px solid #2d3c44; padding: 1px 0 2px; }
.labels { border-top: 1px solid #2d3c44; }
.labels th { height: 8px; }
.labels th:nth-child(1) { width: 92px; }
.labels th:nth-child(2) { width: 92px; }
.labels tr { height: 13px; }
.labels tr:first-child { height: 8px; }
.labels td:nth-child(1) { padding-right: 4px; }
.labels td:nth-child(2) { padding: 0 9px 0 6px; }
.labels tr:nth-child(even) { background: #27333a; }

.notepad { background: #fff; color: #777; padding-left: 1px; }
.notepad > h1 { font-size: 5px; padding-left: 3px; }
.np-menu { display: flex; gap: 4px; height: 7px; padding: 0 2px; background: #f7f7f7; color: #a6a6a6; flex: none; }
.np-menu .x { margin-left: auto; }
.np-tools { display: flex; align-items: center; gap: 2px; height: 10px; padding: 0 3px; background: #f8f8f8; flex: none; }
.np-tools hr { width: 1px; height: 8px; margin: 0; border: 0; background: #ccc; }
.np-tools .on { background: #cbe3f8; }
.c-gray { color: #999; } .c-yellow { color: #d3ad3b; } .c-orange { color: #d2855a; } .c-slate { color: #5e6d78; } .c-green { color: #3a9f55; } .c-blue { color: #4e8fc4; } .c-teal { color: #4f9f94; } .c-red { color: #c44747; } .c-deep { color: #2450c8; } .c-olive { color: #8b9850; } .c-pink { color: #dc9b9b; }
.np-tabs { height: 10px; background: #ededed; flex: none; display: flex; align-items: flex-end; font-size: 4px; }
.np-tabs span { display: flex; align-items: center; gap: 1px; height: 9px; padding: 0 2px; background: #f9f9f9; border-top: 1px solid #f0a045; border-right: 1px solid #aaa; color: #444; }
.np-tabs svg { width: 5px; height: 5px; }
.np-body { flex: 1; display: grid; grid-template-columns: 22px 1fr; font: 7px/8px "Liberation Mono", monospace; }
.ln { background: #e6e6e6; padding-right: 6px; text-align: right; color: #999; }
.np-line { height: 8px; background: #e9e8fb; color: #444; margin-right: 4px; }
.notepad footer { height: 7px; background: #f0f0f0; color: #444; display: grid; grid-template-columns: 101fr 90fr 43fr 40fr 17fr; flex: none; white-space: nowrap; }

.context { position: absolute; left: 87px; top: 241px; width: 85px; height: 206px; display: flex; flex-direction: column; background: #2c343b; }
.context li { flex: 1; min-height: 0; display: flex; align-items: center; gap: 1px; padding: 0 2px; white-space: nowrap; }
.context .sep { flex: none; height: 4px; background: linear-gradient(#414b52, #414b52) center / 100% 1px no-repeat; }
.context .hot { background: #35495a; }
.context .more { margin-left: auto; width: 5px; height: 5px; }
.submenu { position: absolute; left: 172px; top: 2px; bottom: 0; width: 71px; padding-top: 1px; display: flex; flex-direction: column; overflow: hidden; background: #2a3238; border-right: 4px solid #4a5860; }
.submenu label { display: flex; align-items: center; gap: 4px; padding: 1px 3px 0 5px; margin-bottom: 2px; }
.submenu menu { flex: 1; margin-bottom: -4px; display: grid; grid-auto-rows: minmax(0, 1fr); }
.submenu li { padding-left: 3px; display: flex; align-items: center; white-space: nowrap; min-height: 0; }
```
